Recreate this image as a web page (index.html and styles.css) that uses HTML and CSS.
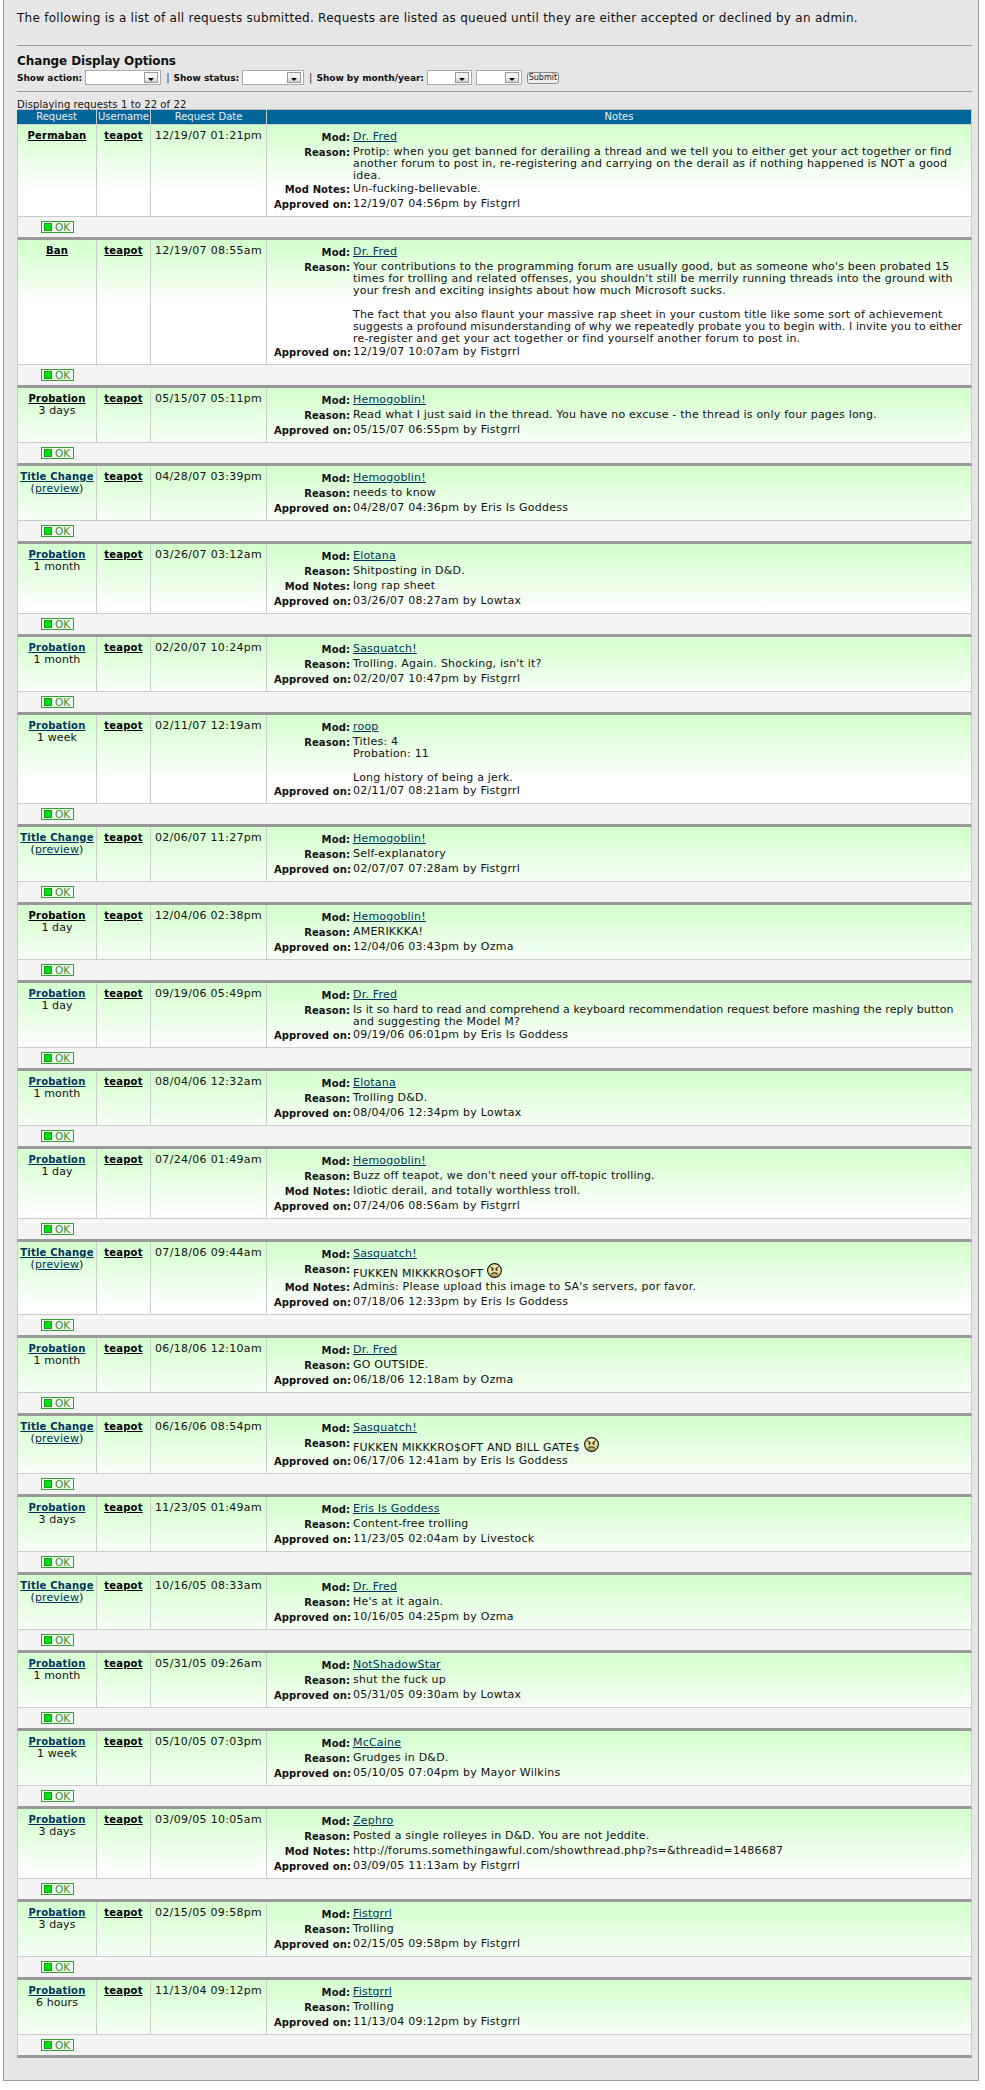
FILE: index.html
```html
<!DOCTYPE html>
<html lang="en">
<head>
<meta charset="utf-8">
<title>Requests</title>
<link rel="stylesheet" href="styles.css">
</head>
<body>
<svg class="defs" width="0" height="0" aria-hidden="true">
  <defs>
    <linearGradient id="face" x1="0" y1="0" x2="0" y2="1"><stop offset="0" stop-color="#f8eeb0"/><stop offset="0.6" stop-color="#ecd98f"/><stop offset="1" stop-color="#b89c5c"/></linearGradient>
    <symbol id="frown" viewBox="0 0 15 15">
      <circle cx="7.5" cy="7.5" r="6.9" fill="url(#face)" stroke="#111" stroke-width="1.1"/>
      <path d="M3.4 3.8 6.4 5.6M11.6 3.8 8.6 5.6" fill="none" stroke="#111" stroke-width="1"/>
      <rect x="4.6" y="5.6" width="1.7" height="2" fill="#111"/>
      <rect x="8.7" y="5.6" width="1.7" height="2" fill="#111"/>
      <path d="M4.4 11.6C5.4 9.2 9.6 9.2 10.6 11.6" fill="none" stroke="#333" stroke-width="1.2"/>
    </symbol>
  </defs>
</svg>
<main class="panel">
  <p class="intro">The following is a list of all requests submitted. Requests are listed as queued until they are either accepted or declined by an admin.</p>
  <form class="options">
    <h2 class="options-title">Change Display Options</h2>
    <div class="filters">
      <span class="filter-label">Show action:</span>
      <span class="sel sel-action"><span class="arrow"></span></span>
      <span class="sep">|</span>
      <span class="filter-label">Show status:</span>
      <span class="sel sel-status"><span class="arrow"></span></span>
      <span class="sep">|</span>
      <span class="filter-label">Show by month/year:</span>
      <span class="sel sel-month"><span class="arrow"></span></span>
      <span class="sel sel-year"><span class="arrow"></span></span>
      <button class="submit" type="button">Submit</button>
    </div>
  </form>
  <p class="count">Displaying requests 1 to 22 of 22</p>
  <table class="requests">
    <colgroup><col class="c1"><col class="c2"><col class="c3"><col class="c4"></colgroup>
    <thead><tr><th>Request</th><th>Username</th><th>Request Date</th><th>Notes</th></tr></thead>
    <tbody>
      <tr class="main"><td><a class="act black" href="#">Permaban</a></td><td><a class="user" href="#">teapot</a></td><td class="date">12/19/07 01:21pm</td><td class="notes"><dl>
        <dt>Mod:</dt><dd><a href="#">Dr. Fred</a></dd>
        <dt>Reason:</dt><dd>Protip: when you get banned for derailing a thread and we tell you to either get your act together or find<br>another forum to post in, re-registering and carrying on the derail as if nothing happened is NOT a good<br>idea.</dd>
        <dt>Mod Notes:</dt><dd>Un-fucking-believable.</dd>
        <dt>Approved on:</dt><dd>12/19/07 04:56pm by Fistgrrl</dd></dl></td></tr>
      <tr class="foot"><td colspan="4"><span class="ok"><i></i>OK</span></td></tr>

      <tr class="main"><td><a class="act black" href="#">Ban</a></td><td><a class="user" href="#">teapot</a></td><td class="date">12/19/07 08:55am</td><td class="notes"><dl>
        <dt>Mod:</dt><dd><a href="#">Dr. Fred</a></dd>
        <dt>Reason:</dt><dd>Your contributions to the programming forum are usually good, but as someone who's been probated 15<br>times for trolling and related offenses, you shouldn't still be merrily running threads into the ground with<br>your fresh and exciting insights about how much Microsoft sucks.<br><br>The fact that you also flaunt your massive rap sheet in your custom title like some sort of achievement<br><span class="tight">suggests a profound misunderstanding of why we repeatedly probate you to begin with. I invite you to either</span><br>re-register and get your act together or find yourself another forum to post in.</dd>
        <dt>Approved on:</dt><dd>12/19/07 10:07am by Fistgrrl</dd></dl></td></tr>
      <tr class="foot"><td colspan="4"><span class="ok"><i></i>OK</span></td></tr>

      <tr class="main"><td><a class="act black" href="#">Probation</a><br>3 days</td><td><a class="user" href="#">teapot</a></td><td class="date">05/15/07 05:11pm</td><td class="notes"><dl>
        <dt>Mod:</dt><dd><a href="#">Hemogoblin!</a></dd>
        <dt>Reason:</dt><dd>Read what I just said in the thread. You have no excuse - the thread is only four pages long.</dd>
        <dt>Approved on:</dt><dd>05/15/07 06:55pm by Fistgrrl</dd></dl></td></tr>
      <tr class="foot"><td colspan="4"><span class="ok"><i></i>OK</span></td></tr>

      <tr class="main"><td><a class="act" href="#">Title Change</a><br>(<a href="#">preview</a>)</td><td><a class="user" href="#">teapot</a></td><td class="date">04/28/07 03:39pm</td><td class="notes"><dl>
        <dt>Mod:</dt><dd><a href="#">Hemogoblin!</a></dd>
        <dt>Reason:</dt><dd>needs to know</dd>
        <dt>Approved on:</dt><dd>04/28/07 04:36pm by Eris Is Goddess</dd></dl></td></tr>
      <tr class="foot"><td colspan="4"><span class="ok"><i></i>OK</span></td></tr>

      <tr class="main"><td><a class="act" href="#">Probation</a><br>1 month</td><td><a class="user" href="#">teapot</a></td><td class="date">03/26/07 03:12am</td><td class="notes"><dl>
        <dt>Mod:</dt><dd><a href="#">Elotana</a></dd>
        <dt>Reason:</dt><dd>Shitposting in D&amp;D.</dd>
        <dt>Mod Notes:</dt><dd>long rap sheet</dd>
        <dt>Approved on:</dt><dd>03/26/07 08:27am by Lowtax</dd></dl></td></tr>
      <tr class="foot"><td colspan="4"><span class="ok"><i></i>OK</span></td></tr>

      <tr class="main"><td><a class="act" href="#">Probation</a><br>1 month</td><td><a class="user" href="#">teapot</a></td><td class="date">02/20/07 10:24pm</td><td class="notes"><dl>
        <dt>Mod:</dt><dd><a href="#">Sasquatch!</a></dd>
        <dt>Reason:</dt><dd>Trolling. Again. Shocking, isn't it?</dd>
        <dt>Approved on:</dt><dd>02/20/07 10:47pm by Fistgrrl</dd></dl></td></tr>
      <tr class="foot"><td colspan="4"><span class="ok"><i></i>OK</span></td></tr>

      <tr class="main"><td><a class="act" href="#">Probation</a><br>1 week</td><td><a class="user" href="#">teapot</a></td><td class="date">02/11/07 12:19am</td><td class="notes"><dl>
        <dt>Mod:</dt><dd><a href="#">roop</a></dd>
        <dt>Reason:</dt><dd>Titles: 4<br>Probation: 11<br><br>Long history of being a jerk.</dd>
        <dt>Approved on:</dt><dd>02/11/07 08:21am by Fistgrrl</dd></dl></td></tr>
      <tr class="foot"><td colspan="4"><span class="ok"><i></i>OK</span></td></tr>

      <tr class="main"><td><a class="act" href="#">Title Change</a><br>(<a href="#">preview</a>)</td><td><a class="user" href="#">teapot</a></td><td class="date">02/06/07 11:27pm</td><td class="notes"><dl>
        <dt>Mod:</dt><dd><a href="#">Hemogoblin!</a></dd>
        <dt>Reason:</dt><dd>Self-explanatory</dd>
        <dt>Approved on:</dt><dd>02/07/07 07:28am by Fistgrrl</dd></dl></td></tr>
      <tr class="foot"><td colspan="4"><span class="ok"><i></i>OK</span></td></tr>

      <tr class="main"><td><a class="act black" href="#">Probation</a><br>1 day</td><td><a class="user" href="#">teapot</a></td><td class="date">12/04/06 02:38pm</td><td class="notes"><dl>
        <dt>Mod:</dt><dd><a href="#">Hemogoblin!</a></dd>
        <dt>Reason:</dt><dd>AMERIKKKA!</dd>
        <dt>Approved on:</dt><dd>12/04/06 03:43pm by Ozma</dd></dl></td></tr>
      <tr class="foot"><td colspan="4"><span class="ok"><i></i>OK</span></td></tr>

      <tr class="main"><td><a class="act" href="#">Probation</a><br>1 day</td><td><a class="user" href="#">teapot</a></td><td class="date">09/19/06 05:49pm</td><td class="notes"><dl>
        <dt>Mod:</dt><dd><a href="#">Dr. Fred</a></dd>
        <dt>Reason:</dt><dd><span class="tight">Is it so hard to read and comprehend a keyboard recommendation request before mashing the reply button</span><br>and suggesting the Model M?</dd>
        <dt>Approved on:</dt><dd>09/19/06 06:01pm by Eris Is Goddess</dd></dl></td></tr>
      <tr class="foot"><td colspan="4"><span class="ok"><i></i>OK</span></td></tr>

      <tr class="main"><td><a class="act" href="#">Probation</a><br>1 month</td><td><a class="user" href="#">teapot</a></td><td class="date">08/04/06 12:32am</td><td class="notes"><dl>
        <dt>Mod:</dt><dd><a href="#">Elotana</a></dd>
        <dt>Reason:</dt><dd>Trolling D&amp;D.</dd>
        <dt>Approved on:</dt><dd>08/04/06 12:34pm by Lowtax</dd></dl></td></tr>
      <tr class="foot"><td colspan="4"><span class="ok"><i></i>OK</span></td></tr>

      <tr class="main"><td><a class="act" href="#">Probation</a><br>1 day</td><td><a class="user" href="#">teapot</a></td><td class="date">07/24/06 01:49am</td><td class="notes"><dl>
        <dt>Mod:</dt><dd><a href="#">Hemogoblin!</a></dd>
        <dt>Reason:</dt><dd>Buzz off teapot, we don't need your off-topic trolling.</dd>
        <dt>Mod Notes:</dt><dd>Idiotic derail, and totally worthless troll.</dd>
        <dt>Approved on:</dt><dd>07/24/06 08:56am by Fistgrrl</dd></dl></td></tr>
      <tr class="foot"><td colspan="4"><span class="ok"><i></i>OK</span></td></tr>

      <tr class="main"><td><a class="act" href="#">Title Change</a><br>(<a href="#">preview</a>)</td><td><a class="user" href="#">teapot</a></td><td class="date">07/18/06 09:44am</td><td class="notes"><dl>
        <dt>Mod:</dt><dd><a href="#">Sasquatch!</a></dd>
        <dt>Reason:</dt><dd>FUKKEN MIKKKRO$OFT <svg class="smiley" viewBox="0 0 15 15"><use href="#frown"/></svg></dd>
        <dt>Mod Notes:</dt><dd>Admins: Please upload this image to SA's servers, por favor.</dd>
        <dt>Approved on:</dt><dd>07/18/06 12:33pm by Eris Is Goddess</dd></dl></td></tr>
      <tr class="foot"><td colspan="4"><span class="ok"><i></i>OK</span></td></tr>

      <tr class="main"><td><a class="act" href="#">Probation</a><br>1 month</td><td><a class="user" href="#">teapot</a></td><td class="date">06/18/06 12:10am</td><td class="notes"><dl>
        <dt>Mod:</dt><dd><a href="#">Dr. Fred</a></dd>
        <dt>Reason:</dt><dd>GO OUTSIDE.</dd>
        <dt>Approved on:</dt><dd>06/18/06 12:18am by Ozma</dd></dl></td></tr>
      <tr class="foot"><td colspan="4"><span class="ok"><i></i>OK</span></td></tr>

      <tr class="main"><td><a class="act" href="#">Title Change</a><br>(<a href="#">preview</a>)</td><td><a class="user" href="#">teapot</a></td><td class="date">06/16/06 08:54pm</td><td class="notes"><dl>
        <dt>Mod:</dt><dd><a href="#">Sasquatch!</a></dd>
        <dt>Reason:</dt><dd>FUKKEN MIKKKRO$OFT AND BILL GATE$ <svg class="smiley" viewBox="0 0 15 15"><use href="#frown"/></svg></dd>
        <dt>Approved on:</dt><dd>06/17/06 12:41am by Eris Is Goddess</dd></dl></td></tr>
      <tr class="foot"><td colspan="4"><span class="ok"><i></i>OK</span></td></tr>

      <tr class="main"><td><a class="act" href="#">Probation</a><br>3 days</td><td><a class="user" href="#">teapot</a></td><td class="date">11/23/05 01:49am</td><td class="notes"><dl>
        <dt>Mod:</dt><dd><a href="#">Eris Is Goddess</a></dd>
        <dt>Reason:</dt><dd>Content-free trolling</dd>
        <dt>Approved on:</dt><dd>11/23/05 02:04am by Livestock</dd></dl></td></tr>
      <tr class="foot"><td colspan="4"><span class="ok"><i></i>OK</span></td></tr>

      <tr class="main"><td><a class="act" href="#">Title Change</a><br>(<a href="#">preview</a>)</td><td><a class="user" href="#">teapot</a></td><td class="date">10/16/05 08:33am</td><td class="notes"><dl>
        <dt>Mod:</dt><dd><a href="#">Dr. Fred</a></dd>
        <dt>Reason:</dt><dd>He's at it again.</dd>
        <dt>Approved on:</dt><dd>10/16/05 04:25pm by Ozma</dd></dl></td></tr>
      <tr class="foot"><td colspan="4"><span class="ok"><i></i>OK</span></td></tr>

      <tr class="main"><td><a class="act" href="#">Probation</a><br>1 month</td><td><a class="user" href="#">teapot</a></td><td class="date">05/31/05 09:26am</td><td class="notes"><dl>
        <dt>Mod:</dt><dd><a href="#">NotShadowStar</a></dd>
        <dt>Reason:</dt><dd>shut the fuck up</dd>
        <dt>Approved on:</dt><dd>05/31/05 09:30am by Lowtax</dd></dl></td></tr>
      <tr class="foot"><td colspan="4"><span class="ok"><i></i>OK</span></td></tr>

      <tr class="main"><td><a class="act" href="#">Probation</a><br>1 week</td><td><a class="user" href="#">teapot</a></td><td class="date">05/10/05 07:03pm</td><td class="notes"><dl>
        <dt>Mod:</dt><dd><a href="#">McCaine</a></dd>
        <dt>Reason:</dt><dd>Grudges in D&amp;D.</dd>
        <dt>Approved on:</dt><dd>05/10/05 07:04pm by Mayor Wilkins</dd></dl></td></tr>
      <tr class="foot"><td colspan="4"><span class="ok"><i></i>OK</span></td></tr>

      <tr class="main"><td><a class="act" href="#">Probation</a><br>3 days</td><td><a class="user" href="#">teapot</a></td><td class="date">03/09/05 10:05am</td><td class="notes"><dl>
        <dt>Mod:</dt><dd><a href="#">Zephro</a></dd>
        <dt>Reason:</dt><dd>Posted a single rolleyes in D&amp;D. You are not Jeddite.</dd>
        <dt>Mod Notes:</dt><dd>http://forums.somethingawful.com/showthread.php?s=&amp;threadid=1486687</dd>
        <dt>Approved on:</dt><dd>03/09/05 11:13am by Fistgrrl</dd></dl></td></tr>
      <tr class="foot"><td colspan="4"><span class="ok"><i></i>OK</span></td></tr>

      <tr class="main"><td><a class="act" href="#">Probation</a><br>3 days</td><td><a class="user" href="#">teapot</a></td><td class="date">02/15/05 09:58pm</td><td class="notes"><dl>
        <dt>Mod:</dt><dd><a href="#">Fistgrrl</a></dd>
        <dt>Reason:</dt><dd>Trolling</dd>
        <dt>Approved on:</dt><dd>02/15/05 09:58pm by Fistgrrl</dd></dl></td></tr>
      <tr class="foot"><td colspan="4"><span class="ok"><i></i>OK</span></td></tr>

      <tr class="main"><td><a class="act" href="#">Probation</a><br>6 hours</td><td><a class="user" href="#">teapot</a></td><td class="date">11/13/04 09:12pm</td><td class="notes"><dl>
        <dt>Mod:</dt><dd><a href="#">Fistgrrl</a></dd>
        <dt>Reason:</dt><dd>Trolling</dd>
        <dt>Approved on:</dt><dd>11/13/04 09:12pm by Fistgrrl</dd></dl></td></tr>
      <tr class="foot"><td colspan="4"><span class="ok"><i></i>OK</span></td></tr>
    </tbody>
  </table>
</main>
</body>
</html>
```

FILE: styles.css
```css
* { box-sizing: border-box; }
html, body { margin: 0; padding: 0; background: #fff; }
body {
  font-family: "DejaVu Sans", Verdana, sans-serif;
  font-size: 11px;
  line-height: 12px;
  color: #111;
}
.defs { display: block; height: 0; }
.panel {
  width: 976px;
  margin-left: 3px;
  height: 2081px;
  padding: 0 6px 0 13px;
  background: #e6e6e6;
  border-left: 1px solid #999;
  border-right: 1px solid #999;
  border-bottom: 1px solid #999;
}
.intro {
  margin: 0;
  padding: 11px 0 19px;
  font-size: 12px;
  line-height: 15px;
  border-bottom: 1px solid #999;
  letter-spacing: 0.27px;
}
.options {
  margin: 0;
  padding: 7px 0 6px;
  border-bottom: 1px solid #999;
}
.options-title {
  margin: 0 0 1px;
  height: 16px;
  font-size: 12px;
  line-height: 16px;
  letter-spacing: -0.1px;
  font-weight: bold;
}
.filters {
  display: flex;
  align-items: center;
  height: 15px;
}
.filter-label { font-weight: bold; font-size: 9px; letter-spacing: -0.03px; white-space: nowrap; }
.sep { margin: 0 4px 0 5px; font-size: 10px; color: #333; }
.sel {
  display: flex;
  justify-content: flex-end;
  align-items: center;
  height: 15px;
  margin-left: 3px;
  background: #fff;
  border: 1px solid #aaa;
  padding-right: 2px;
}
.sel-action { width: 76px; }
.sel-status { width: 62px; }
.sel-month { width: 45px; }
.sel-year { width: 46px; margin-left: 4px; }
.arrow {
  display: flex;
  justify-content: center;
  align-items: flex-end;
  width: 14px;
  height: 11px;
  padding-bottom: 1px;
  background: linear-gradient(#f2f2f2 50%, #cfcfcf);
  border: 1px solid #999;
}
.arrow::after {
  content: "";
  border-left: 3px solid transparent;
  border-right: 3px solid transparent;
  border-top: 3px solid #000;
}
.submit {
  width: 32px;
  height: 12px;
  margin-left: 5px;
  padding: 0;
  font-family: inherit;
  font-size: 8px;
  line-height: 10px;
  color: #222;
  background: #eee;
  border: 1px solid #888;
  border-radius: 3px;
}
.count {
  margin: 0;
  padding-top: 7px;
  height: 17px;
  font-size: 10px;
  line-height: 12px;
  white-space: nowrap;
  letter-spacing: 0.1px;
}
.requests {
  width: 955px;
  table-layout: fixed;
  border-collapse: separate;
  border-spacing: 0;
}
.c1 { width: 80px; }
.c2 { width: 54px; }
.c3 { width: 116px; }
.c4 { width: 705px; }
.requests th {
  height: 16px;
  padding: 0;
  font-weight: normal;
  font-size: 10px;
  line-height: 14px;
  color: #e8eef2;
  background: #006699;
  border-top: 1px solid #bbb;
  border-right: 1px solid #ccc;
  border-bottom: 1px solid #ccc;
  text-align: center;
}
.main td {
  padding: 5px 0 4px;
  vertical-align: top;
  text-align: center;
  background: #fff linear-gradient(#d5ffcf, #d8ffd2 10px, #fff) no-repeat;
  background-size: 100% 65px;
  border-right: 1px solid #ccc;
  border-bottom: 1px solid #ccc;
  letter-spacing: 0.1px;
}
.main td:first-child, .foot td { border-left: 1px solid #ccc; }
.main td.date { letter-spacing: 0.3px; white-space: nowrap; }
.main td.notes { padding-left: 7px; text-align: left; letter-spacing: 0.2px; }
a { color: #00335f; text-decoration: underline; }
.act { font-weight: bold; font-size: 10px; letter-spacing: 0.2px; white-space: nowrap; }
.act.black, .user { color: #000; }
.user { font-weight: bold; font-size: 10px; letter-spacing: 0.2px; }
.notes dl {
  display: grid;
  grid-template-columns: 76px 1fr;
  column-gap: 3px;
  margin: 0;
}
.notes dt {
  font-weight: bold;
  font-size: 10px;
  letter-spacing: 0.1px;
  line-height: 15px;
  text-align: right;
  white-space: nowrap;
}
.notes dd { margin: 0; padding-top: 1px; white-space: nowrap; }
.notes dd:last-child { letter-spacing: 0.25px; }
.tight { letter-spacing: 0.07px; }
.smiley { display: inline-block; width: 15px; height: 15px; vertical-align: baseline; margin-bottom: -1px; }
.foot td {
  height: 23px;
  padding: 4px 0 0 23px;
  vertical-align: top;
  background: #f4f4f4;
  border-right: 1px solid #ccc;
  border-bottom: 3px solid #999;
}
.ok {
  display: flex;
  align-items: center;
  width: 33px;
  height: 12px;
  padding-left: 2px;
  font-size: 10.5px;
  line-height: 10px;
  color: #3a8f3a;
  background: #eefbe9;
  border: 1px solid #33a033;
}
.ok i {
  display: block;
  width: 8px;
  height: 8px;
  margin-right: 3px;
  background: #00e01a;
  border: 1px solid #149c14;
}
```
